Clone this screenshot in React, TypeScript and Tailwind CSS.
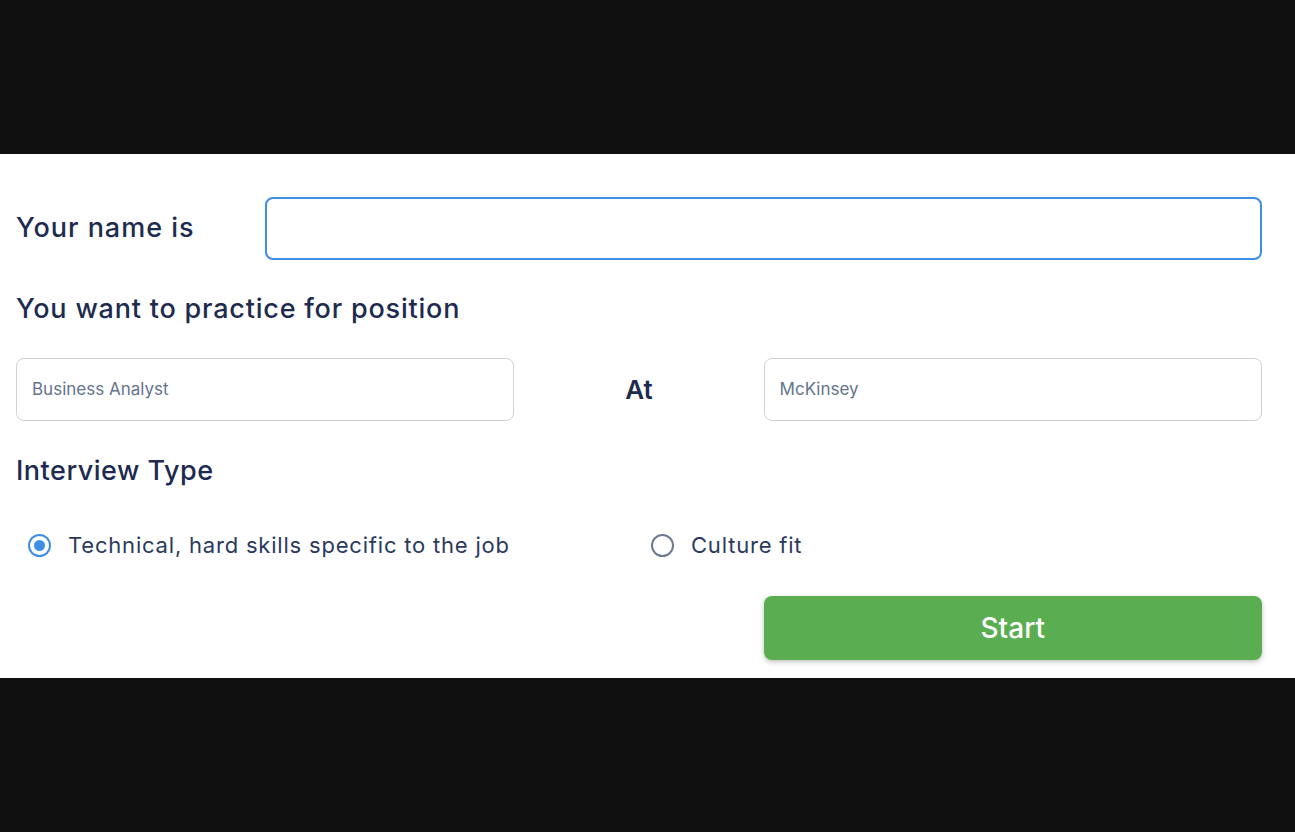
import React, { useState } from 'react';

const App = () => {
  const [name, setName] = useState('');
  const [position, setPosition] = useState('');
  const [company, setCompany] = useState('');
  const [type, setType] = useState<'technical' | 'culture'>('technical');

  return (
    <div className="min-h-[832px] bg-[#0f0f0f] flex flex-col" style={{ fontFamily: 'Inter, "Noto Sans", sans-serif' }}>
      <div className="h-[154px]" />

      {/* Form panel */}
      <div className="bg-white pl-4 pr-[33px] pt-[43px] pb-[18px] text-[#1d2b4f]">
        {/* Name row */}
        <div className="grid grid-cols-5 items-center">
          <label className="col-span-1 text-[27px] font-medium tracking-[1px]">Your name is</label>
          <input
            value={name}
            onChange={(e) => setName(e.target.value)}
            className="col-span-4 h-[63px] rounded-lg border-2 border-[#3d8ee4] px-4 text-lg outline-none"
          />
        </div>

        <h2 className="mt-[29px] text-[27px] font-medium tracking-[0.8px]">You want to practice for position</h2>

        {/* Position row */}
        <div className="mt-[28px] grid grid-cols-5 items-center">
          <input
            value={position}
            onChange={(e) => setPosition(e.target.value)}
            placeholder="Business Analyst"
            className="col-span-2 h-[63px] rounded-lg border border-[#d1d1d1] px-[15px] text-[17px] text-[#334155] placeholder:text-[#64748b] outline-none"
          />
          <div className="col-span-1 text-center text-[26px] font-semibold">At</div>
          <input
            value={company}
            onChange={(e) => setCompany(e.target.value)}
            placeholder="McKinsey"
            className="col-span-2 h-[63px] rounded-lg border border-[#d1d1d1] px-[15px] text-[17px] text-[#334155] placeholder:text-[#64748b] outline-none"
          />
        </div>

        <h2 className="mt-[30px] text-[27px] font-medium tracking-[0.5px]">Interview Type</h2>

        {/* Radios */}
        <div className="mt-[38px] grid grid-cols-2">
          {[
            { key: 'technical', label: 'Technical, hard skills specific to the job' },
            { key: 'culture', label: 'Culture fit' },
          ].map((opt) => (
            <label key={opt.key} className="flex items-center gap-[17px] pl-3 cursor-pointer">
              <span
                onClick={() => setType(opt.key as any)}
                className={`w-[23px] h-[23px] rounded-full border-2 flex items-center justify-center ${
                  type === opt.key ? 'border-[#3d8ee4]' : 'border-[#6b7a90]'
                }`}
              >
                {type === opt.key && <span className="w-[11px] h-[11px] rounded-full bg-[#3d8ee4]" />}
              </span>
              <span className="text-[22px] tracking-[0.8px] text-[#2a3a5c]">{opt.label}</span>
            </label>
          ))}
        </div>

        {/* Start */}
        <div className="mt-[34px] grid grid-cols-5">
          <button className="col-start-4 col-span-2 h-[64px] rounded-lg bg-[#5aae51] text-white text-[28px] font-medium shadow-[0_2px_5px_rgba(0,0,0,0.25)]">
            Start
          </button>
        </div>
      </div>

      <div className="flex-1" />
    </div>
  );
};

export default App;
